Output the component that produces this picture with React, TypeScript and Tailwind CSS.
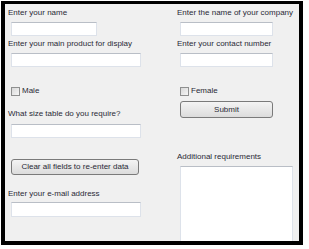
const font = { fontFamily: '"Liberation Sans", Arial, sans-serif' };

function Label({ children, className = "" }: { children: React.ReactNode; className?: string }) {
  return (
    <div className={`shrink-0 h-[10px] text-[8px] leading-[10px] text-[#2a2a36] whitespace-nowrap ${className}`}>
      {children}
    </div>
  );
}

function TextBox({ className = "" }: { className?: string }) {
  return (
    <div
      className={`shrink-0 ml-[3px] bg-white border border-[#dde2ea] border-t-[#b9bec6] ${className}`}
    />
  );
}

function Check({ label }: { label: string }) {
  return (
    <div className="ml-[3px] flex items-center gap-[2px] h-[10px]">
      <div className="w-[9px] h-[9px] border border-[#8e8f8f] bg-gradient-to-br from-[#d8d8d8] to-[#f6f6f6]" />
      <span className="text-[8px] leading-[10px] text-[#2a2a36]">{label}</span>
    </div>
  );
}

function Button({ children, className = "" }: { children: React.ReactNode; className?: string }) {
  return (
    <div
      className={`shrink-0 ml-[3px] flex items-center justify-center rounded-[3px] border border-[#7a7a7a] bg-gradient-to-b from-[#f4f4f4] to-[#dcdcdc] text-[8px] text-[#2a2a36] whitespace-nowrap ${className}`}
    >
      {children}
    </div>
  );
}

export default function App() {
  return (
    <div className="w-[309px] h-[249px] bg-white pl-[1px] pt-[1px]" style={font}>
      <div className="w-[302px] h-[244px] border-l-4 border-r-4 border-b-4 border-t-[3px] border-black bg-[#f0f0f0] overflow-hidden flex pl-[3px] pt-[4px]">
        <div className="w-[169px] flex flex-col">
          <Label>Enter your name</Label>
          <TextBox className="mt-[4px] w-[86px] h-[14px]" />
          <Label className="mt-[3px]">Enter your main product for display</Label>
          <TextBox className="mt-[4px] w-[130px] h-[14px]" />
          <div className="shrink-0 mt-[19px]">
            <Check label="Male" />
          </div>
          <Label className="mt-[13px]">What size table do you require?</Label>
          <TextBox className="mt-[5px] w-[130px] h-[14px]" />
          <Button className="mt-[21px] w-[128px] h-[16px]">Clear all fields to re-enter data</Button>
          <Label className="mt-[14px]">Enter your e-mail address</Label>
          <TextBox className="mt-[3px] w-[130px] h-[15px]" />
        </div>
        <div className="flex-1 flex flex-col">
          <Label>Enter the name of your company</Label>
          <TextBox className="mt-[4px] w-[93px] h-[14px]" />
          <Label className="mt-[3px]">Enter your contact number</Label>
          <TextBox className="mt-[4px] w-[93px] h-[14px]" />
          <div className="shrink-0 mt-[19px]">
            <Check label="Female" />
          </div>
          <Button className="mt-[5px] w-[93px] h-[17px]">Submit</Button>
          <Label className="mt-[34px]">Additional requirements</Label>
          <TextBox className="mt-[4px] w-[113px] h-[90px]" />
        </div>
      </div>
    </div>
  );
}
